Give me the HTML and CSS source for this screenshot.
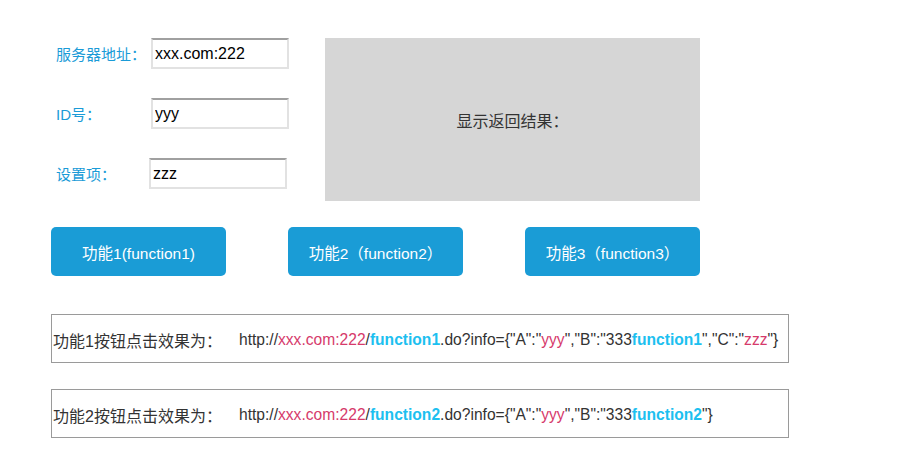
FILE: index.html
```html
<!DOCTYPE html>
<html lang="zh-CN">
<head>
<meta charset="utf-8">
<title>功能测试</title>
<link rel="stylesheet" href="styles.css">
</head>
<body>
<div class="page">
  <div class="top">
    <div class="form">
      <div class="row"><span class="label">服务器地址：</span><input class="field" type="text" value="xxx.com:222"></div>
      <div class="row"><span class="label">ID号：</span><input class="field" type="text" value="yyy"></div>
      <div class="row"><span class="label label-short">设置项：</span><input class="field" type="text" value="zzz"></div>
    </div>
    <div class="result">显示返回结果：</div>
  </div>
  <div class="buttons">
    <button class="btn">功能1(function1)</button>
    <button class="btn">功能2（function2）</button>
    <button class="btn">功能3（function3）</button>
  </div>
  <div class="effect">
    <span class="effect-title">功能1按钮点击效果为：</span>
    <span class="url">http://<span class="host">xxx.com:222</span>/<b class="fn">function1</b>.do?info={"A":"<span class="host">yyy</span>","B":"333<b class="fn">function1</b>","C":"<span class="host">zzz</span>"}</span>
  </div>
  <div class="effect effect-second">
    <span class="effect-title">功能2按钮点击效果为：</span>
    <span class="url">http://<span class="host">xxx.com:222</span>/<b class="fn">function2</b>.do?info={"A":"<span class="host">yyy</span>","B":"333<b class="fn">function2</b>"}</span>
  </div>
</div>
</body>
</html>
```

FILE: styles.css
```css
html, body {
  margin: 0;
  padding: 0;
  background: #ffffff;
}

body {
  font-family: "Liberation Sans", "Noto Sans CJK SC", sans-serif;
  color: #333333;
}

.page {
  padding: 38px 0 0 51px;
}

.top {
  display: flex;
  align-items: flex-start;
}

.form {
  display: flex;
  flex-direction: column;
  gap: 29px;
  margin-left: 5px;
  width: 233px;
}

.row {
  display: flex;
  align-items: center;
  height: 31px;
}

.label {
  width: 95px;
  flex: none;
  font-size: 15px;
  color: #1a9bd7;
  white-space: nowrap;
}

.label-short {
  width: 93px;
}

.field {
  box-sizing: border-box;
  width: 138px;
  height: 31px;
  margin: 0;
  padding: 0 0 0 2px;
  border: 2px solid #e2e2e2;
  border-top-color: #a0a0a0;
  font-family: "Liberation Sans", "Noto Sans CJK SC", sans-serif;
  font-size: 16px;
  color: #000000;
  background: #ffffff;
  outline: none;
}

.result {
  box-sizing: border-box;
  width: 375px;
  height: 163px;
  margin-left: 36px;
  background: #d6d6d6;
  display: flex;
  align-items: center;
  justify-content: center;
  font-size: 16px;
  color: #333333;
}

.buttons {
  display: flex;
  gap: 62px;
  margin-top: 26px;
}

.btn {
  box-sizing: border-box;
  width: 175px;
  height: 49px;
  margin: 0;
  padding: 0;
  border: none;
  border-radius: 5px;
  background: #1a9cd6;
  color: #ffffff;
  font-family: "Liberation Sans", "Noto Sans CJK SC", sans-serif;
  font-size: 15.5px;
  cursor: pointer;
}

.effect {
  box-sizing: border-box;
  width: 738px;
  height: 49px;
  margin-top: 38px;
  border: 1px solid #9a9a9a;
  display: flex;
  align-items: center;
  padding: 2px 0 0 1px;
  font-size: 16px;
  color: #333333;
  white-space: nowrap;
}

.effect-second {
  margin-top: 26px;
}

.effect-title {
  width: 186px;
  flex: none;
}

.url {
  font-size: 15.6px;
}

.host {
  color: #d63a6b;
}

.fn {
  color: #1cc0f0;
  font-weight: bold;
}
```
